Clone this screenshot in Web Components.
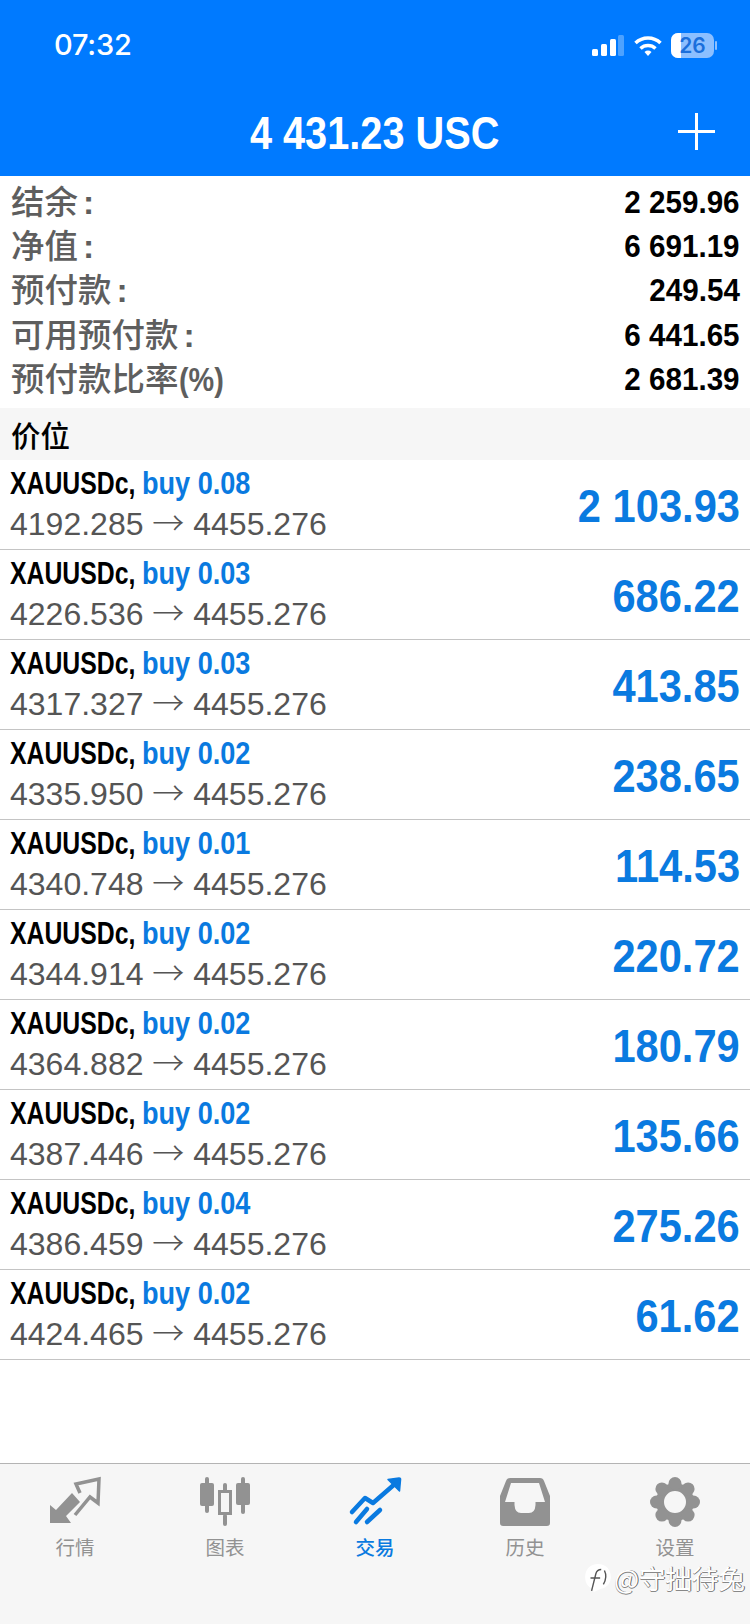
<!DOCTYPE html>
<html lang="zh">
<head>
<meta charset="utf-8">
<title>MT5</title>
<style>
  html, body { margin: 0; padding: 0; background: #fff; }
  body {
    width: 750px;
    height: 1624px;
    display: flex;
    flex-direction: column;
    position: relative;
    overflow: hidden;
    font-family: "Liberation Sans", "Noto Sans CJK SC", sans-serif;
  }
  position-list { flex: 1; }
</style>
</head>
<body>
  <app-header time="07:32" title="4 431.23 USC"></app-header>
  <account-summary>
    <summary-row label="结余" tail=":" value="2 259.96"></summary-row>
    <summary-row label="净值" tail=":" value="6 691.19"></summary-row>
    <summary-row label="预付款" tail=":" value="249.54"></summary-row>
    <summary-row label="可用预付款" tail=":" value="6 441.65"></summary-row>
    <summary-row label="预付款比率" tail="(%)" value="2 681.39"></summary-row>
  </account-summary>
  <section-title>价位</section-title>
  <position-list>
    <position-row symbol="XAUUSDc," side="buy 0.08" open="4192.285" close="4455.276" profit="2 103.93"></position-row>
    <position-row symbol="XAUUSDc," side="buy 0.03" open="4226.536" close="4455.276" profit="686.22"></position-row>
    <position-row symbol="XAUUSDc," side="buy 0.03" open="4317.327" close="4455.276" profit="413.85"></position-row>
    <position-row symbol="XAUUSDc," side="buy 0.02" open="4335.950" close="4455.276" profit="238.65"></position-row>
    <position-row symbol="XAUUSDc," side="buy 0.01" open="4340.748" close="4455.276" profit="114.53"></position-row>
    <position-row symbol="XAUUSDc," side="buy 0.02" open="4344.914" close="4455.276" profit="220.72"></position-row>
    <position-row symbol="XAUUSDc," side="buy 0.02" open="4364.882" close="4455.276" profit="180.79"></position-row>
    <position-row symbol="XAUUSDc," side="buy 0.02" open="4387.446" close="4455.276" profit="135.66"></position-row>
    <position-row symbol="XAUUSDc," side="buy 0.04" open="4386.459" close="4455.276" profit="275.26"></position-row>
    <position-row symbol="XAUUSDc," side="buy 0.02" open="4424.465" close="4455.276" profit="61.62"></position-row>
  </position-list>
  <tab-bar>
    <tab-item label="行情">
      <svg viewBox="0 0 56 56" width="56" height="56"><path d="M3 47V29l6 5 16-17 8 9-14 14 5 7z" fill="#929292"/><path d="M33 17l-4-9 23-5-1 24-8-6-15 18" fill="none" stroke="#929292" stroke-width="3.500"/></svg>
    </tab-item>
    <tab-item label="图表">
      <svg viewBox="0 0 56 56" width="56" height="56"><g fill="#929292"><rect x="3" y="7" width="14" height="23" rx="2"/><rect x="8" y="1" width="4" height="36" rx="2"/><rect x="39" y="7" width="14" height="22" rx="2"/><rect x="44" y="1" width="4" height="37" rx="2"/><rect x="26" y="7" width="4" height="9" rx="2"/><rect x="26" y="38" width="4" height="12" rx="2"/></g><rect x="22.500" y="15.500" width="11" height="22" fill="none" stroke="#929292" stroke-width="3"/></svg>
    </tab-item>
    <tab-item label="交易" active>
      <svg viewBox="0 0 56 56" width="56" height="56"><g fill="none" stroke="#0a7ae0" stroke-width="4.500" stroke-linecap="round" stroke-linejoin="round"><path d="M5 36l13-14 8 5 23-20"/><path d="M9 46l11-13M20 46l13-12"/></g><path d="M41 3.500l11-1.500q2 0 1.500 2l-1 11z" fill="#0a7ae0" stroke="#0a7ae0" stroke-width="1.500" stroke-linejoin="round"/></svg>
    </tab-item>
    <tab-item label="历史">
      <svg viewBox="0 0 56 56" width="56" height="56"><path fill-rule="evenodd" fill="#929292" d="M13 2h30q3 0 4 3l6 15v27q0 3-3 3H6q-3 0-3-3V20L9 5q1-3 4-3zM14 7L8 26h9.500v3Q18 37 24 37h8q6 0 6.500-8v-3H48L42 7z"/></svg>
    </tab-item>
    <tab-item label="设置">
      <svg viewBox="0 0 56 56" width="56" height="56"><circle cx="28" cy="26" r="15" fill="none" stroke="#929292" stroke-width="8"/><g fill="#929292"><circle cx="28" cy="7.500" r="6.500"/><circle cx="41.100" cy="12.900" r="6.500"/><circle cx="46.500" cy="26" r="6.500"/><circle cx="41.100" cy="39.100" r="6.500"/><circle cx="28" cy="44.500" r="6.500"/><circle cx="14.900" cy="39.100" r="6.500"/><circle cx="9.500" cy="26" r="6.500"/><circle cx="14.900" cy="12.900" r="6.500"/></g></svg>
    </tab-item>
  </tab-bar>
  <water-mark text="@守拙待兔"></water-mark>

<script>
const BOLD = '"Liberation Sans", sans-serif'

class AppHeader extends HTMLElement {
  constructor() {
    super()
    this.attachShadow({ mode: 'open' })
    this.shadowRoot.innerHTML = `
      <style>
        :host { display: block; background: #007aff; color: #fff; height: 176px; }
        .status { height: 88px; display: flex; align-items: center; justify-content: space-between; padding: 0 33px 0 54px; box-sizing: border-box; }
        .time { font: 500 29px Inter, sans-serif; letter-spacing: -.2px; }
        .icons { display: flex; align-items: center; gap: 10px; padding-top: 2px; }
        .icons svg:last-child { margin-left: -1px; }
        .bar { height: 88px; display: flex; align-items: center; justify-content: center; position: relative; }
        h1 { margin: 0; font: 700 47px ${BOLD}; transform: scaleX(.845); white-space: nowrap; }
        .plus { position: absolute; right: 35px; top: 25px; }
      </style>
      <div class="status">
        <span class="time">${this.getAttribute('time')}</span>
        <div class="icons">
          <svg width="32" height="21" viewBox="0 0 32 21"><g fill="#fff"><rect x="0" y="14" width="6" height="7" rx="1.500"/><rect x="9" y="9" width="6" height="12" rx="1.500"/><rect x="18" y="4" width="6" height="17" rx="1.500"/><rect x="26" y="0" width="6" height="21" rx="1.500" opacity=".3"/></g></svg>
          <svg width="28" height="21" viewBox="0 0 28 21"><g fill="none" stroke="#fff" stroke-width="3.500"><path d="M1.500 8a18 18 0 0 1 25 0"/><path d="M6.500 13.500a11 11 0 0 1 15 0"/></g><path d="M10.500 17a5.500 5.500 0 0 1 7 0L14 21z" fill="#fff"/></svg>
          <svg width="46" height="25" viewBox="0 0 46 25"><rect x="0" y="0" width="43" height="25" rx="7" fill="#8cbfff"/><path d="M7 0h3v25H7a7 7 0 0 1-7-7V7a7 7 0 0 1 7-7z" fill="#fff"/><rect x="44" y="8" width="2" height="9" rx="1" fill="#8cbfff"/><text x="21.500" y="20" text-anchor="middle" font-family="Inter, sans-serif" font-size="21" font-weight="600" fill="#1a6fdc">26</text></svg>
        </div>
      </div>
      <div class="bar">
        <h1>${this.getAttribute('title')}</h1>
        <svg class="plus" width="37" height="37" viewBox="0 0 37 37"><path d="M18.500 0v37M0 18.500h37" stroke="#fff" stroke-width="3"/></svg>
      </div>`
  }
}

class AccountSummary extends HTMLElement {
  constructor() {
    super()
    this.attachShadow({ mode: 'open' })
    this.shadowRoot.innerHTML = `
      <style>:host { display: block; height: 232px; padding: 4px 0 0; box-sizing: border-box; }</style>
      <slot></slot>`
  }
}

class SummaryRow extends HTMLElement {
  constructor() {
    super()
    this.attachShadow({ mode: 'open' })
    const tail = this.getAttribute('tail')
    this.shadowRoot.innerHTML = `
      <style>
        :host { display: flex; justify-content: space-between; align-items: center; height: 44.300px; padding: 0 10px 0 11px; }
        .l { font: 500 33.500px/44px "Noto Sans CJK SC", sans-serif; color: #5e5e5e; margin-top: -2px; white-space: nowrap; }
        .t { display: inline-block; font: 700 33.500px/44px ${BOLD}; transform-origin: left center; }
        .colon { margin-left: 5px; }
        .pct { transform: scaleX(.86); }
        .v { font: 700 32px ${BOLD}; color: #000; transform: scaleX(.925); transform-origin: right center; white-space: nowrap; }
      </style>
      <span class="l">${this.getAttribute('label')}<span class="t ${tail === ':' ? 'colon' : 'pct'}">${tail}</span></span>
      <span class="v">${this.getAttribute('value')}</span>`
  }
}

class SectionTitle extends HTMLElement {
  constructor() {
    super()
    this.attachShadow({ mode: 'open' })
    this.shadowRoot.innerHTML = `
      <style>
        :host { display: flex; align-items: center; height: 52px; padding-left: 11px; background: #f6f6f6; color: #000;
          font: 500 29.500px "Noto Sans CJK SC", sans-serif; }
      </style>
      <slot></slot>`
  }
}

class PositionRow extends HTMLElement {
  constructor() {
    super()
    this.attachShadow({ mode: 'open' })
    this.shadowRoot.innerHTML = `
      <style>
        :host { display: flex; justify-content: space-between; align-items: center; height: 90px; box-sizing: border-box;
          padding: 0 10px; border-bottom: 1px solid #c4c4c4; }
        .name { font: 700 31px/40px ${BOLD}; color: #000; white-space: nowrap; margin-top: -2px; }
        .name span { display: inline-block; transform-origin: left center; }
        .sym { transform: scaleX(.8); margin-right: -33px; }
        .side { color: #0a7ae0; transform: scaleX(.874); }
        .price { font: 400 32px/40px "Liberation Sans", sans-serif; color: #555; margin-top: 0; white-space: nowrap; }
        .arrow { font-family: "Noto Sans CJK SC", sans-serif; font-weight: 300; line-height: 1; }
        .profit { font: 700 47px ${BOLD}; color: #0a7ae0; transform: scaleX(.886); transform-origin: right center; margin-top: 2px; white-space: nowrap; }
      </style>
      <div>
        <div class="name"><span class="sym">${this.getAttribute('symbol')}</span> <span class="side">${this.getAttribute('side')}</span></div>
        <div class="price">${this.getAttribute('open')} <span class="arrow">→</span> ${this.getAttribute('close')}</div>
      </div>
      <span class="profit">${this.getAttribute('profit')}</span>`
  }
}

class TabBar extends HTMLElement {
  constructor() {
    super()
    this.attachShadow({ mode: 'open' })
    this.shadowRoot.innerHTML = `
      <style>
        :host { display: grid; grid-template-columns: repeat(5, 1fr); height: 161px; box-sizing: border-box;
          background: #f6f6f6; border-top: 1px solid #b4b4b4; padding-top: 12px; align-items: start; }
      </style>
      <slot></slot>`
  }
}

class TabItem extends HTMLElement {
  constructor() {
    super()
    this.attachShadow({ mode: 'open' })
    const on = this.hasAttribute('active')
    this.shadowRoot.innerHTML = `
      <style>
        :host { display: flex; flex-direction: column; align-items: center; gap: 2px;
          font: ${on ? 500 : 400} 19.500px/26px "Noto Sans CJK SC", sans-serif; color: ${on ? '#0a7ae0' : '#929292'}; }
        ::slotted(svg) { display: block; }
      </style>
      <slot></slot>
      <span>${this.getAttribute('label')}</span>`
  }
}

class WaterMark extends HTMLElement {
  constructor() {
    super()
    this.attachShadow({ mode: 'open' })
    this.shadowRoot.innerHTML = `
      <style>
        :host { position: absolute; left: 584px; top: 1558px; display: flex; align-items: center; gap: 2px;
          font: 400 26.500px "Noto Sans CJK SC", sans-serif; color: #fff;
          text-shadow: 1px 0 0 #666, 0 1px 0 #888; white-space: nowrap; }
      </style>
      <svg width="28" height="30" viewBox="0 0 26 28"><path d="M8 24C3 22 1 18 1 13 1 6 6 1 13 1s12 5 12 12c0 6-4 10-9 11l-7 3z" fill="#fff"/><path d="M7 26l4-16q1-4 5-4M6 14h9M19 7q3 6-1 13" fill="none" stroke="#555" stroke-width="1.300"/></svg>
      <span>${this.getAttribute('text')}</span>`
  }
}

customElements.define('app-header', AppHeader)
customElements.define('account-summary', AccountSummary)
customElements.define('summary-row', SummaryRow)
customElements.define('section-title', SectionTitle)
customElements.define('position-row', PositionRow)
customElements.define('tab-bar', TabBar)
customElements.define('tab-item', TabItem)
customElements.define('water-mark', WaterMark)
</script>
</body>
</html>
